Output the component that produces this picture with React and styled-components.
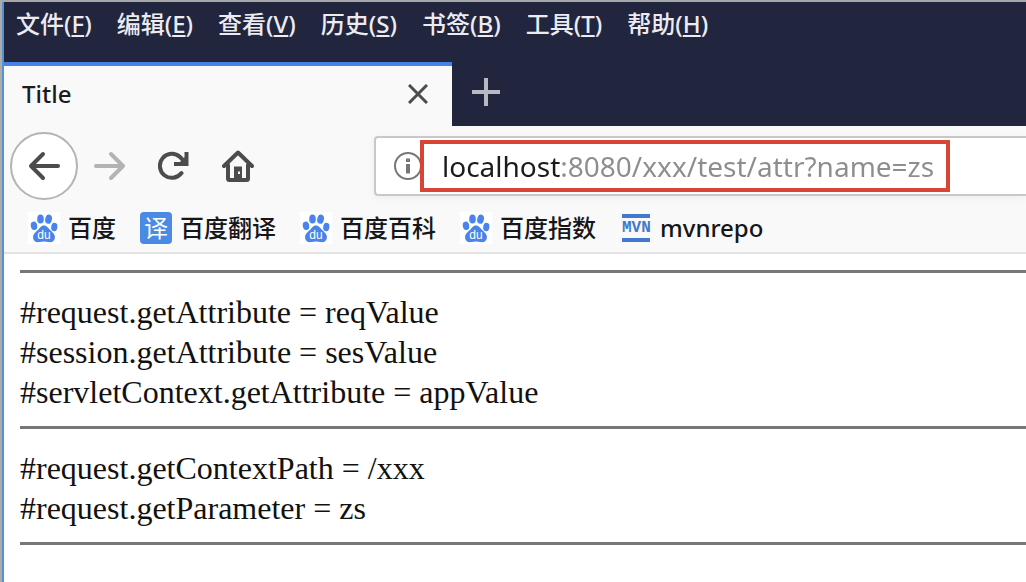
import React from "react";
import styled, { createGlobalStyle } from "styled-components";

const GlobalStyle = createGlobalStyle`
  * {
    box-sizing: border-box;
  }
  body {
    margin: 0;
    background: #fff;
    font-family: "Noto Sans", "Noto Sans CJK SC", sans-serif;
    font-size: 24px;
    line-height: 32px;
  }
  button, input {
    font: inherit;
    border: 0;
    padding: 0;
    background: none;
  }
`;

const Window = styled.div`
  display: flex;
  min-height: 100vh;
  overflow: hidden;
  border-top: 2px solid #a6a8a8;
  border-left: 2px solid #a9adad;
`;

const WindowBody = styled.div`
  flex: 1;
  min-width: 0;
  border-left: 2px solid #5a8fd0;
`;

const Chrome = styled.header`
  background: #22253e;
`;

const MenuBar = styled.nav`
  display: flex;
  gap: 25px;
  padding: 6px 12px 22px;
`;

const MenuItem = styled.button`
  color: #ececf0;
  font-weight: 500;
  white-space: nowrap;
  u {
    text-decoration-thickness: 2px;
    text-underline-offset: 2px;
  }
`;

const TabStrip = styled.div`
  display: flex;
  align-items: stretch;
  height: 64px;
`;

const Tab = styled.div`
  display: flex;
  align-items: center;
  justify-content: space-between;
  width: 448px;
  padding: 0 22px 4px 18px;
  background: #f9f9fa;
  border-top: 4px solid #4583e8;
  color: #1c1c1f;
  font-weight: 500;
`;

const IconButton = styled.button`
  display: flex;
  align-items: center;
  justify-content: center;
  flex: none;
  width: ${(props) => props.$width || 32}px;
  color: ${(props) => props.$color || "#4c4c4c"};
`;

const NewTabButton = styled(IconButton)`
  padding-bottom: 4px;
`;

const BackButton = styled(IconButton)`
  height: 68px;
  border: 2px solid #b4b4b4;
  border-radius: 50%;
  background: #fff;
`;

const NavBar = styled.div`
  display: flex;
  align-items: center;
  gap: 16px;
  padding: 6px 0 0 6px;
  background: #f9f9fa;
`;

const NavButtons = styled.div`
  display: flex;
  flex: none;
  gap: 32px;
  margin-right: 104px;
`;

const UrlBar = styled.div`
  display: flex;
  align-items: center;
  flex: 1;
  height: 60px;
  padding-left: 16px;
  background: #fff;
  border: 2px solid #c8c8c8;
  border-right: 0;
  border-radius: 4px 0 0 4px;
  box-shadow: 0 2px 8px rgba(0, 0, 0, 0.05);
`;

const Highlight = styled.div`
  flex: 0 1 530px;
  height: 52px;
  border: 4px solid #d94534;
`;

/* the host stays dark, the rest of the address is dimmed */
const UrlInput = styled.input`
  width: 100%;
  height: 44px;
  padding-left: 18px;
  font-size: 28px;
  color: #8d8d8d;
  background: linear-gradient(to right, #1b1b1e 136px, #8d8d8d 136px);
  -webkit-background-clip: text;
  background-clip: text;
  -webkit-text-fill-color: transparent;
  outline: none;
`;

const Bookmarks = styled.nav`
  display: flex;
  gap: 24px;
  padding: 12px 24px 8px;
  background: #f9f9fa;
  border-bottom: 2px solid #e3e3e4;
`;

const Bookmark = styled.a`
  display: flex;
  align-items: center;
  gap: 8px;
  color: #161618;
  font-weight: 500;
  text-decoration: none;
  white-space: nowrap;
`;

const TranslateIcon = styled.span`
  width: 32px;
  height: 32px;
  border-radius: 4px;
  background: #4a89e4;
  color: #fff;
  font-weight: 400;
  text-align: center;
`;

const MvnIcon = styled.span`
  width: 28px;
  height: 28px;
  margin: 0 2px;
  border-top: 4px solid #4279cc;
  border-bottom: 4px solid #4279cc;
  color: #4279cc;
  font: bold 16px/20px "Liberation Mono", monospace;
  text-align: center;
`;

const Content = styled.main`
  padding: 16px 0 16px 16px;
  font-family: "Liberation Serif", serif;
  font-size: 32px;
  line-height: 40px;
  color: #111;
`;

const Rule = styled.hr`
  height: 3px;
  margin: 0 0 19px;
  border: 0;
  background: #777;
`;

const Lines = styled.p`
  margin: 0 0 14px;
`;

const PawIcon = () => (
  <svg width="32" height="32" viewBox="0 0 32 32" aria-hidden="true">
    <rect width="32" height="32" fill="#fff" />
    <g fill="#4a84ea">
      <ellipse cx="12.5" cy="7" rx="3.3" ry="4.6" />
      <ellipse cx="20.6" cy="7.2" rx="3.3" ry="4.6" transform="rotate(12 20.6 7.2)" />
      <ellipse cx="6" cy="13.8" rx="3.2" ry="4.2" transform="rotate(-12 6 13.8)" />
      <ellipse cx="26.3" cy="15" rx="3.1" ry="4.2" transform="rotate(6 26.3 15)" />
      <path d="M16 13.4c3 0 4.6 2.8 6.2 4.7 2 2.2 5 4 4.7 7.6-.3 3.6-3.6 4.9-6.2 4.4-1.7-.3-3-.5-4.7-.5s-3 .2-4.7.5c-2.6.5-5.9-.8-6.2-4.4-.3-3.6 2.7-5.4 4.7-7.6 1.6-1.9 3.2-4.7 6.2-4.7z" />
    </g>
    <text x="16" y="27" fill="#fff" fontSize="12" fontFamily="Liberation Sans, sans-serif" textAnchor="middle">
      du
    </text>
  </svg>
);

const CloseIcon = () => (
  <svg width="20" height="20" viewBox="0 0 20 20" stroke="currentColor" strokeWidth="3">
    <path d="M1 1l18 18M19 1L1 19" />
  </svg>
);

const PlusIcon = () => (
  <svg width="28" height="28" viewBox="0 0 28 28" stroke="currentColor" strokeWidth="4">
    <path d="M14 0v28M0 14h28" />
  </svg>
);

const ArrowIcon = ({ flip }) => (
  <svg width="32" height="32" viewBox="0 0 32 32" fill="none" stroke="currentColor" strokeWidth="4" strokeLinecap="round" strokeLinejoin="round">
    <path d={flip ? "M2 16h27M17 4l12 12-12 12" : "M30 16H3M15 4L3 16l12 12"} />
  </svg>
);

const ReloadIcon = () => (
  <svg width="32" height="32" viewBox="0 0 32 32" fill="none" stroke="currentColor" strokeWidth="4">
    <path d="M23.500 23A12 12 0 1 1 22 7l4 4" strokeLinecap="round" />
    <path d="M16 14H28.500V2" />
    <path d="M20 14l8-8v8z" fill="currentColor" stroke="none" />
  </svg>
);

const HomeIcon = () => (
  <svg width="32" height="32" viewBox="0 0 32 32" fill="none" stroke="currentColor" strokeWidth="4" strokeLinecap="round" strokeLinejoin="round">
    <path d="M2 16L16 2.500 30 16" />
    <path d="M6 15v13.500q0 1.500 1.500 1.500h17q1.500 0 1.500-1.500V15" />
    <path d="M12 30V16.500h8V30z" fill="currentColor" stroke="none" />
    <path d="M16 21.500h2v2.500h-2z" fill="#f9f9fa" stroke="none" />
  </svg>
);

const InfoIcon = () => (
  <svg width="28" height="28" viewBox="0 0 28 28" fill="none" stroke="#777" strokeWidth="2">
    <circle cx="16" cy="14" r="13" />
    <path d="M16 12v9.500M16 6.500v3.500" strokeWidth="4" />
  </svg>
);

const menus = [
  ["文件", "F"],
  ["编辑", "E"],
  ["查看", "V"],
  ["历史", "S"],
  ["书签", "B"],
  ["工具", "T"],
  ["帮助", "H"],
];

const bookmarks = [
  { label: "百度", icon: <PawIcon /> },
  { label: "百度翻译", icon: <TranslateIcon aria-hidden="true">译</TranslateIcon> },
  { label: "百度百科", icon: <PawIcon /> },
  { label: "百度指数", icon: <PawIcon /> },
  { label: "mvnrepo", icon: <MvnIcon aria-hidden="true">MVN</MvnIcon> },
];

const App = () => {
  return (
    <Window>
      <GlobalStyle />
      <WindowBody>
        <Chrome>
          <MenuBar>
            {menus.map(([label, key]) => (
              <MenuItem key={key}>
                {label}(<u>{key}</u>)
              </MenuItem>
            ))}
          </MenuBar>
          <TabStrip>
            <Tab>
              Title
              <IconButton $width={24} aria-label="Close tab">
                <CloseIcon />
              </IconButton>
            </Tab>
            <NewTabButton $width={68} $color="#b9b9c4" aria-label="New tab">
              <PlusIcon />
            </NewTabButton>
          </TabStrip>
        </Chrome>

        <NavBar>
          <BackButton $width={68} aria-label="Back">
            <ArrowIcon />
          </BackButton>
          <NavButtons>
            <IconButton $color="#b3b3b3" aria-label="Forward">
              <ArrowIcon flip />
            </IconButton>
            <IconButton aria-label="Reload">
              <ReloadIcon />
            </IconButton>
            <IconButton aria-label="Home">
              <HomeIcon />
            </IconButton>
          </NavButtons>
          <UrlBar>
            <InfoIcon />
            <Highlight>
              <UrlInput
                type="text"
                aria-label="Address"
                spellCheck={false}
                defaultValue="localhost:8080/xxx/test/attr?name=zs"
              />
            </Highlight>
          </UrlBar>
        </NavBar>

        <Bookmarks>
          {bookmarks.map(({ label, icon }) => (
            <Bookmark key={label} href="#">
              {icon}
              {label}
            </Bookmark>
          ))}
        </Bookmarks>

        <Content>
          <Rule />
          <Lines>
            #request.getAttribute = reqValue
            <br />
            #session.getAttribute = sesValue
            <br />
            #servletContext.getAttribute = appValue
          </Lines>
          <Rule />
          <Lines>
            #request.getContextPath = /xxx
            <br />
            #request.getParameter = zs
          </Lines>
          <Rule />
        </Content>
      </WindowBody>
    </Window>
  );
};

export default App;
